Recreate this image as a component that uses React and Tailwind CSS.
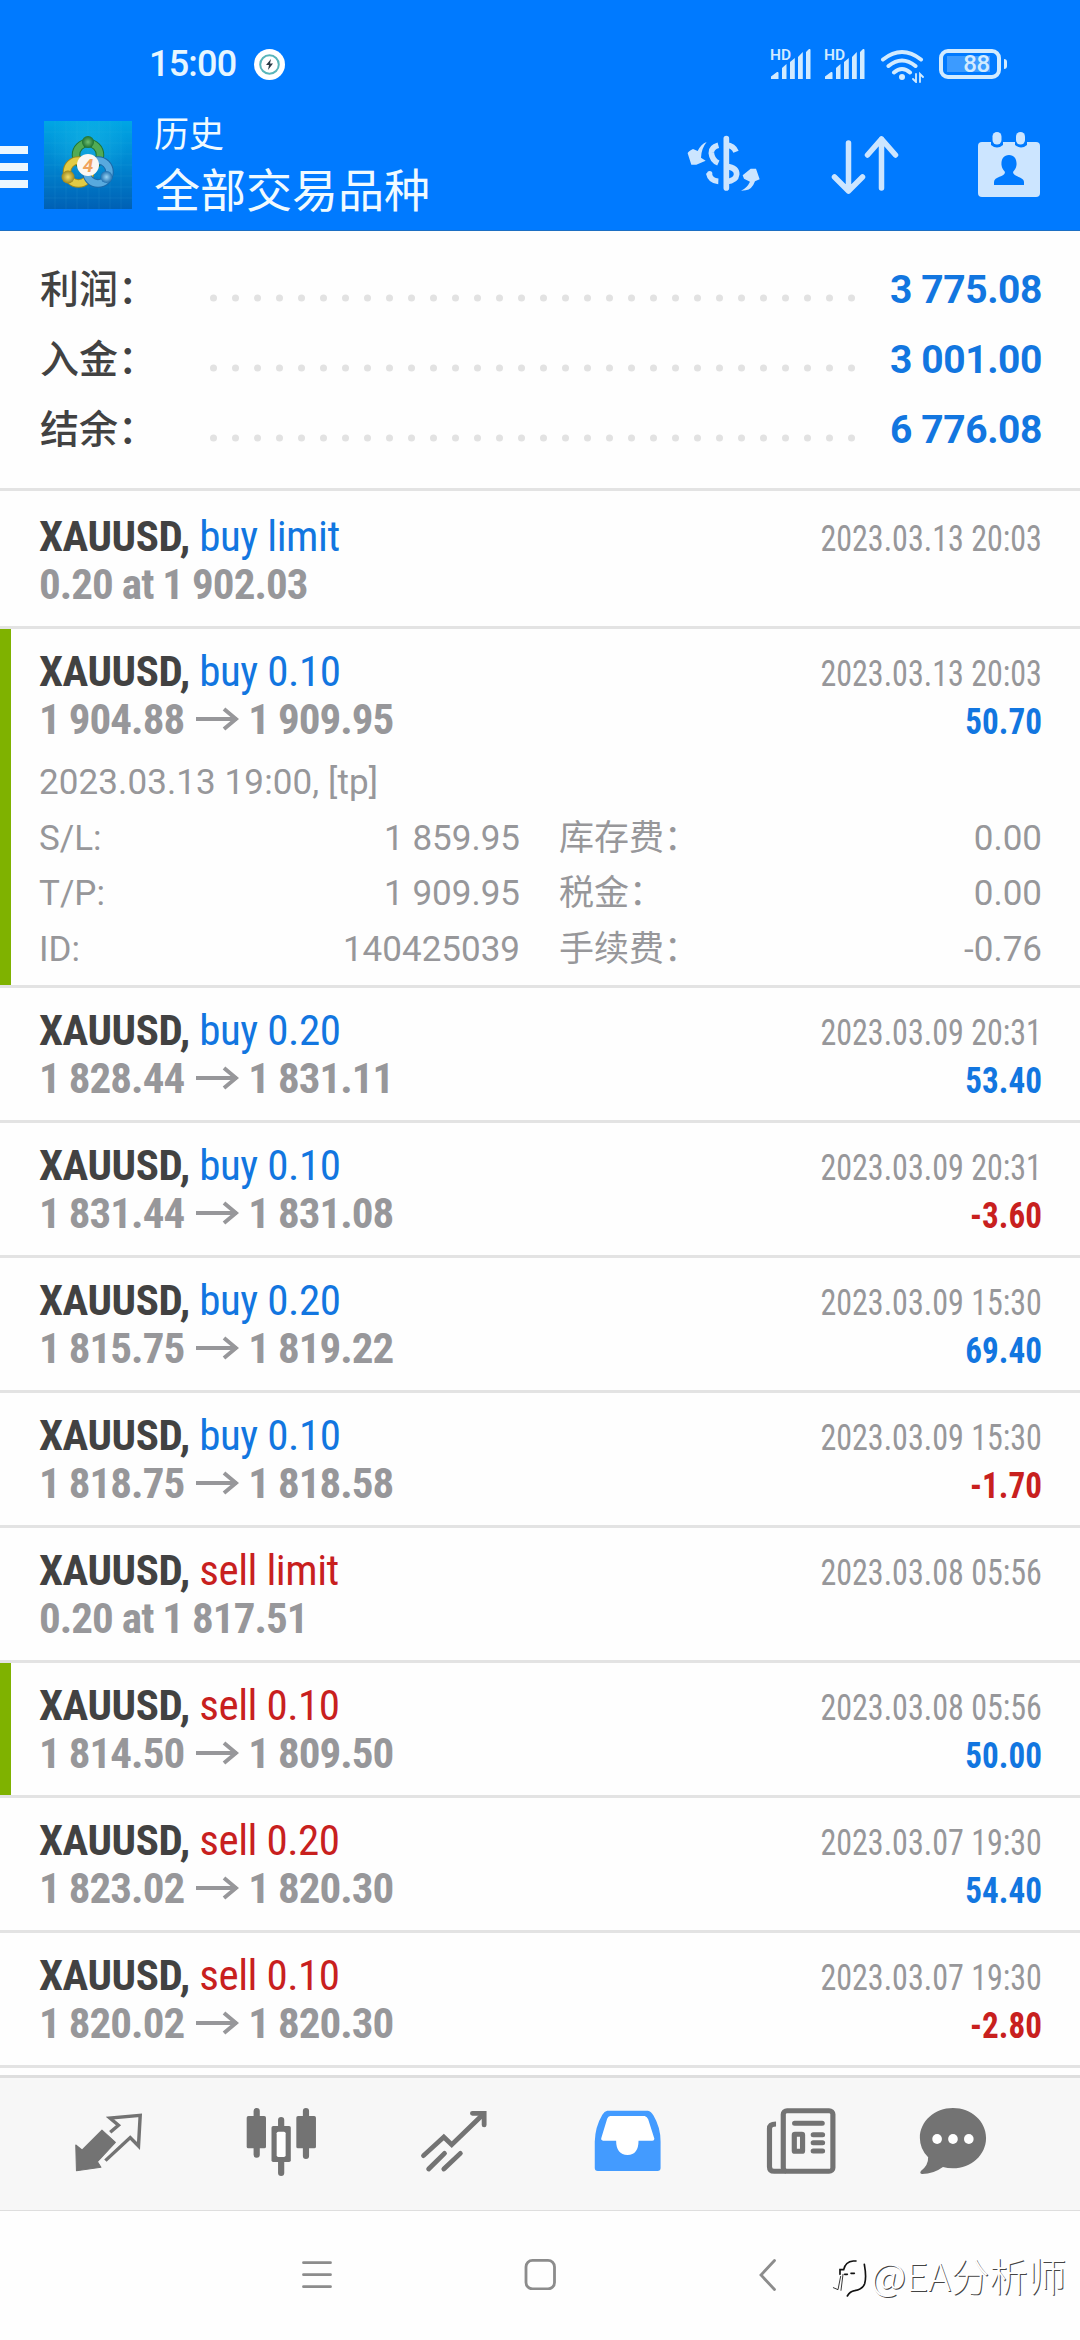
import React from 'react';
import clsx from 'clsx';

const summary = [
  { label: '利润：', value: '3 775.08' },
  { label: '入金：', value: '3 001.00' },
  { label: '结余：', value: '6 776.08' },
];

const deals = [
  { side: 'buy', volume: 'limit', at: '0.20 at 1 902.03', time: '2023.03.13 20:03' },
  {
    side: 'buy', volume: '0.10', from: '1 904.88', to: '1 909.95', time: '2023.03.13 20:03', profit: '50.70', marked: true,
    details: {
      comment: '2023.03.13 19:00, [tp]',
      rows: [
        ['S/L:', '1 859.95', '库存费：', '0.00'],
        ['T/P:', '1 909.95', '税金：', '0.00'],
        ['ID:', '140425039', '手续费：', '-0.76'],
      ],
    },
  },
  { side: 'buy', volume: '0.20', from: '1 828.44', to: '1 831.11', time: '2023.03.09 20:31', profit: '53.40' },
  { side: 'buy', volume: '0.10', from: '1 831.44', to: '1 831.08', time: '2023.03.09 20:31', profit: '-3.60' },
  { side: 'buy', volume: '0.20', from: '1 815.75', to: '1 819.22', time: '2023.03.09 15:30', profit: '69.40' },
  { side: 'buy', volume: '0.10', from: '1 818.75', to: '1 818.58', time: '2023.03.09 15:30', profit: '-1.70' },
  { side: 'sell', volume: 'limit', at: '0.20 at 1 817.51', time: '2023.03.08 05:56' },
  { side: 'sell', volume: '0.10', from: '1 814.50', to: '1 809.50', time: '2023.03.08 05:56', profit: '50.00', marked: true },
  { side: 'sell', volume: '0.20', from: '1 823.02', to: '1 820.30', time: '2023.03.07 19:30', profit: '54.40' },
  { side: 'sell', volume: '0.10', from: '1 820.02', to: '1 820.30', time: '2023.03.07 19:30', profit: '-2.80' },
];

function Signal() {
  return (
    <svg className="w-[42px] h-[32px] overflow-visible" viewBox="0 0 42 32" fill="currentColor">
      <text x="0" y="12" fontSize="15.500" fontWeight="600" fontFamily="Roboto, sans-serif">HD</text>
      <path d="M1 31v-2.5l6-4.5q1.500-.5 1.500 1v6zM12 31V20l4.500-4v15zM20 31V14l4.800-4v21zM28 31V9l4.800-5v27zM36 31V4l3-3q1.500-.5 1.500 1v29z" />
    </svg>
  );
}

function Wifi() {
  return (
    <svg className="w-[44px] h-[34px]" viewBox="0 0 44 34" fill="none" stroke="currentColor" strokeWidth="4" strokeLinecap="round">
      <path d="M3 10.500q19-15 38 0M8.500 17q13.500-11 27 0M14 23.500q8-7 16 0" />
      <circle cx="22" cy="28" r="3" fill="currentColor" stroke="none" />
      <path d="M36 25v8l-3-3M40 33v-8l3 3" strokeWidth="1.800" />
    </svg>
  );
}

function Logo() {
  return (
    <svg className="w-[88px] h-[88px]" viewBox="0 0 88 88">
      <defs>
        <linearGradient id="sky" x1="0" y1="0" x2="0" y2="1">
          <stop offset="0" stopColor="#00a6e4" />
          <stop offset="0.5" stopColor="#0085d0" />
          <stop offset="1" stopColor="#0060b4" />
        </linearGradient>
        <radialGradient id="glow">
          <stop offset="0" stopColor="#20c0e8" stopOpacity="0.5" />
          <stop offset="1" stopColor="#20c0e8" stopOpacity="0" />
        </radialGradient>
        <radialGradient id="green"><stop offset="0" stopColor="#6fbf72" /><stop offset="1" stopColor="#1d7030" /></radialGradient>
        <radialGradient id="gold"><stop offset="0" stopColor="#f3df6a" /><stop offset="1" stopColor="#9c861c" /></radialGradient>
        <radialGradient id="aqua"><stop offset="0" stopColor="#9bd5f5" /><stop offset="1" stopColor="#2070b0" /></radialGradient>
      </defs>
      <rect width="88" height="88" fill="url(#sky)" />
      <circle cx="44" cy="24" r="40" fill="url(#glow)" />
      <path d="M11 0v88M22 0v88M33 0v88M44 0v88M55 0v88M66 0v88M77 0v88M0 11h88M0 22h88M0 33h88M0 44h88M0 55h88M0 66h88M0 77h88" stroke="#4cc4ee" strokeOpacity="0.15" strokeWidth="0.7" />
      <g fill="none" strokeWidth="6.500">
        <circle cx="44" cy="34" r="12" stroke="#1f7535" strokeWidth="8.500" />
        <circle cx="44" cy="34" r="12" stroke="#52ab55" />
        <circle cx="34.500" cy="51" r="11.500" stroke="#a08a1c" strokeWidth="8.500" />
        <circle cx="34.500" cy="51" r="11.500" stroke="#e2cb45" />
        <circle cx="54" cy="51" r="11.500" stroke="#1c68a8" strokeWidth="8.500" />
        <circle cx="54" cy="51" r="11.500" stroke="#58a9de" />
      </g>
      <circle cx="44" cy="21" r="6" fill="url(#green)" />
      <circle cx="24" cy="56" r="6.500" fill="url(#gold)" />
      <circle cx="62.500" cy="56" r="6" fill="url(#aqua)" />
      <circle cx="44" cy="44" r="11" fill="#fbf7f2" />
      <text x="44" y="51" textAnchor="middle" fontSize="19" fontWeight="700" fontStyle="italic" fontFamily="Roboto, sans-serif" fill="#f0a35c">4</text>
    </svg>
  );
}

function StatusBar() {
  return (
    <div className="flex items-center h-[30px] mt-[49px] pl-[149px] pr-[73px] text-[#d2ebff]">
      <span className="font-['Roboto'] font-medium text-[36px] leading-[30px] w-[88px] tracking-[-0.8px] text-[#e6f6ff]">15:00</span>
      <svg className="w-[31px] h-[31px] ml-[17px]" viewBox="0 0 31 31">
        <circle cx="15.500" cy="15.500" r="15.500" fill="#fff" />
        <circle cx="15.500" cy="15.500" r="9.300" fill="none" stroke="#59b5b9" strokeWidth="2" />
        <path d="M17 10l-5 6h3l-1 5 5-6.500h-3z" fill="#2b3a45" />
      </svg>
      <div className="flex items-center ml-auto">
        <Signal />
        <div className="ml-[12px]"><Signal /></div>
        <div className="ml-[14px] mt-1"><Wifi /></div>
        <div className="flex items-center ml-[15px]">
          <div className="flex items-center w-[62px] h-[30px] border-[4px] border-current rounded-[9px] px-1">
            <div className="flex items-center justify-center w-[43px] h-4 pl-4 bg-[#3c9bff] font-['Roboto'] font-medium text-[24px] tracking-[-0.5px]">88</div>
          </div>
          <div className="w-[3px] h-[10px] ml-[3px] rounded-r bg-current" />
        </div>
      </div>
    </div>
  );
}

function Toolbar() {
  return (
    <div className="flex items-start mt-[42px] text-[#cce5ff]">
      <div className="flex flex-col gap-[9px] mt-[25px] w-7">
        <div className="h-2 bg-[#ebf7ff]" />
        <div className="h-2 bg-[#ebf7ff]" />
        <div className="h-2 bg-[#ebf7ff]" />
      </div>
      <div className="ml-4"><Logo /></div>
      <div className="ml-[22px] -mt-[11px] text-[#f0faff] font-['Noto_Sans_CJK_SC']">
        <div className="text-[35px] leading-[44px]">历史</div>
        <div className="text-[46px] leading-[66px]">全部交易品种</div>
      </div>
      <div className="flex items-start ml-auto pr-[39px]">
        <svg className="w-[76px] h-[60px] mt-[13px]" viewBox="46 42 228 180" preserveAspectRatio="none" fill="none" stroke="currentColor" strokeWidth="17">
          <path d="M164 56V204" strokeLinecap="round" />
          <path d="M140 76Q118 82 119 99Q121 121 140 129M111 159Q116 183 140 184" />
          <circle cx="114" cy="161" r="8" fill="currentColor" stroke="none" />
          <path d="M164 75Q186 77 193 95M164 139Q196 143 195 163Q193 183 164 185" />
          <path d="M105 66Q88 72 78 93L64 87Q48 95 48 100L59 134H74L102 122L88 113Q89 85 105 66Z" fill="currentColor" stroke="none" />
          <path d="M208 212Q226 204 235 185L217 176L213 166L237 146H253L264 178L250 184Q241 209 222 211Z" fill="currentColor" stroke="none" />
        </svg>
        <svg className="w-[70px] h-[60px] ml-[68px] mt-[13px]" viewBox="0 0 70 60" fill="none" stroke="currentColor" strokeWidth="5.500" strokeLinecap="round" strokeLinejoin="round">
          <path d="M17.500 9v48M3.500 43l14 14 14-14M50.500 54V5M36.500 21l14-16 14 16" />
        </svg>
        <svg className="w-[64px] h-[66px] ml-[76px] mt-[10px]" viewBox="0 0 64 66" fill="currentColor">
          <rect x="1" y="11" width="62" height="55" rx="4" />
          <path d="M14 0h12v14q-6 5-12 0zM38 0h12v14q-6 5-12 0z" fill="#007aff" />
          <rect x="15.500" y="1" width="9" height="12.500" rx="4.500" />
          <rect x="39" y="1" width="9" height="12.500" rx="4.500" />
          <path d="M32 24c5.500 0 8 4.500 7.500 10-.3 3.500-2 5-3.500 7 0 5 11 4.500 11 10v3H17v-3c0-5.500 11-5 11-10-1.500-2-3.200-3.500-3.500-7C24 28.500 26.500 24 32 24z" fill="#007aff" />
        </svg>
      </div>
    </div>
  );
}

function SummaryRow({ label, value }) {
  return (
    <div className="flex items-center h-[70px]">
      <div className="w-[170px] pb-[7px] font-['Noto_Sans_CJK_SC'] font-medium text-[39px] text-[#424242]">{label}</div>
      <svg className="w-[646px] h-2 mt-4" viewBox="0 0 646 8" fill="#e2e2e2">
        {Array.from({ length: 30 }, (_, i) => (
          <circle key={i} cx={3.5 + i * 22} cy="4" r="3.500" />
        ))}
      </svg>
      <div className="ml-auto pr-[38px] pt-px font-['Roboto'] font-bold text-[39px] tracking-[-0.4px] text-[#1276e0]">{value}</div>
    </div>
  );
}

function Deal({ deal, first }) {
  const loss = deal.profit && deal.profit.startsWith('-');
  return (
    <div className="flex border-b-[3px] border-[#e3e3e3]">
      <div className={clsx('w-[11px]', deal.marked && 'bg-[#7fb200]')} />
      <div className={clsx('flex-1 pl-[28px] pr-[38px]', first ? 'pt-[21px]' : 'pt-[18px]', deal.details ? 'h-[356px]' : first ? 'h-[135px]' : 'h-[132px]')}>
        <div className="flex justify-between font-['Roboto'] font-stretch-condensed">
          <div className="text-[43px] leading-[48px]">
            <div className="font-bold tracking-[-0.45px] text-[#424242]">
              XAUUSD,{' '}
              <span className={clsx('font-normal', deal.side === 'buy' ? 'text-[#1276e0]' : 'text-[#c8201e]')}>
                {deal.side} {deal.volume}
              </span>
            </div>
            <div className="flex items-center font-bold tracking-[-0.95px] text-[#97979a]">
              {deal.at || (
                <>
                  {deal.from}
                  <svg className="w-[43px] h-[24px] ml-[12px] mr-[9px]" viewBox="0 0 43 24" fill="none" stroke="currentColor" strokeWidth="4">
                    <path d="M0 12h41M28 2l12 10-12 10" />
                  </svg>
                  {deal.to}
                </>
              )}
            </div>
          </div>
          <div className="pt-[3px] text-right text-[36px] leading-[48px]">
            <div className="origin-right scale-x-[0.89] text-[#97979a]">{deal.time}</div>
            <div className={clsx('origin-right scale-x-[0.92] font-bold', loss ? 'text-[#c8201e]' : 'text-[#1276e0]')}>{deal.profit}</div>
          </div>
        </div>
        {deal.details && (
          <div className="mt-[9px] font-['Roboto','Noto_Sans_CJK_SC'] text-[35px] leading-[55.5px] text-[#97979a]">
            <div className="h-[55.5px] tracking-[0.1px]">{deal.details.comment}</div>
            {deal.details.rows.map(([k1, v1, k2, v2]) => (
              <div key={k1} className="flex h-[55.5px]">
                <div className="flex justify-between w-[481px]">
                  <span>{k1}</span>
                  <span>{v1}</span>
                </div>
                <div className="flex justify-between flex-1 pl-[39px]">
                  <span>{k2}</span>
                  <span>{v2}</span>
                </div>
              </div>
            ))}
          </div>
        )}
      </div>
    </div>
  );
}

function TabBar() {
  const cell = 'w-[173px] h-[132px]';
  return (
    <div className="flex h-[136px] pl-[22px] bg-[#f7f7f7] border-t-[3px] border-b border-[#dedede] text-[#737373]">
      <svg className={cell} viewBox="64 84 502 396" preserveAspectRatio="none">
        <path d="M296 240L335 277L283 335L293 352L222 362L220 285L238 300Z" fill="currentColor" stroke="currentColor" strokeWidth="3" strokeLinejoin="round" />
        <path d="M320 247L344 226L319 204L407 196L402 288L378 263L306 332" fill="none" stroke="currentColor" strokeWidth="10" />
      </svg>
      <svg className={cell} viewBox="566 84 502 396" preserveAspectRatio="none">
        <path d="M745 183V314M888 183V318M816 210V240M816 330V369" stroke="currentColor" strokeWidth="18" strokeLinecap="round" />
        <rect x="716" y="198" width="56" height="97" rx="5" fill="currentColor" />
        <rect x="860" y="198" width="57" height="97" rx="5" fill="currentColor" />
        <rect x="788" y="228" width="56" height="108" rx="5" fill="currentColor" />
        <rect x="803" y="245" width="26" height="76" rx="5" fill="#fff" />
      </svg>
      <svg className={cell} viewBox="1069 84 502 396" preserveAspectRatio="none" fill="none" stroke="currentColor" strokeWidth="14" strokeLinecap="round">
        <path d="M1230 317L1289 261L1312 284L1404 192" />
        <path d="M1372 190H1406V225" />
        <path d="M1245 357L1291 310M1289 357L1337 310" />
      </svg>
      <svg className={clsx(cell, 'text-[#439bff]')} viewBox="3 84 502 396" preserveAspectRatio="none">
        <path d="M195 182H313Q323 184 329 196Q350 232 350 275V354Q350 363 341 363H168Q159 363 159 354V275Q160 230 181 194Q187 183 195 182Z" fill="currentColor" />
        <path d="M204 198H304Q311 200 314 208L332 266Q332 272 326 272H286Q286 314 254 315Q221 313 221 272H183Q176 271 178 264L195 206Q198 199 204 198Z" fill="#fff" />
      </svg>
      <svg className={cell} viewBox="505 84 502 396" preserveAspectRatio="none" fill="none" stroke="currentColor" strokeWidth="15">
        <rect x="706" y="182" width="144" height="182" rx="11" />
        <path d="M685 222Q666 222 666 236V350Q666 364 680 364H715" />
        <path d="M739 220H819M793 254H820M793 278H820M793 303H820" strokeLinecap="round" />
        <rect x="738" y="253" width="24" height="51" rx="2" />
      </svg>
      <svg className={cell} viewBox="1007.6 84 502 396" preserveAspectRatio="none" fill="currentColor">
        <path d="M1199 174C1252 174 1295 213 1295 264C1295 315 1252 355 1199 355Q1183 355 1170 351Q1142 372 1110 372Q1101 371 1106 363Q1128 346 1127 322Q1103 297 1103 264C1103 213 1146 174 1199 174Z" />
        <g fill="#fff">
          <ellipse cx="1153" cy="267" rx="14" ry="15" />
          <ellipse cx="1199" cy="267" rx="14" ry="15" />
          <ellipse cx="1245" cy="267" rx="14" ry="15" />
        </g>
      </svg>
    </div>
  );
}

function SystemNav() {
  return (
    <div className="relative flex items-start flex-1 pt-[47px] pl-[301px] text-[#8c8c8c]">
      <svg className="w-8 h-8" viewBox="0 0 32 32" stroke="currentColor" strokeWidth="2.800" strokeLinecap="round">
        <path d="M2.500 4.700h27M2.500 16.700h27M2.500 28.700h27" />
      </svg>
      <svg className="w-8 h-8 ml-[191px]" viewBox="0 0 32 32" fill="none" stroke="currentColor" strokeWidth="2.800">
        <rect x="2" y="2.400" width="28.500" height="28.500" rx="6.500" />
      </svg>
      <svg className="w-[18px] h-[34px] ml-[202px]" viewBox="0 0 18 34" fill="none" stroke="currentColor" strokeWidth="2.800" strokeLinecap="round">
        <path d="M16.500 2.500L3 17l13.500 14.500" />
      </svg>
      <div className="absolute left-[830px] top-[35px] flex items-center h-[56px] whitespace-nowrap">
        <svg className="w-[42px] h-[44px] mt-[10px] -mr-px" viewBox="30 70 126 132" fill="none" stroke="#111" strokeWidth="5" strokeLinecap="round">
          <path d="M60 122V108H71Q76 84 100 82H108M133 92Q140 130 134 150Q128 167 104 171Q90 173 82 187" />
          <path d="M62 128L54 168L40 162M69 122L63 170" strokeWidth="2.500" />
          <path d="M74 122H82M93 119H103" />
        </svg>
        <span className="font-['Noto_Sans_CJK_SC'] font-light text-[38.500px] leading-[56px] text-white [text-shadow:1px_1px_0_#444]">@EA分析师</span>
      </div>
    </div>
  );
}

export default function App() {
  return (
    <div className="flex flex-col w-[1080px] h-[2340px] overflow-hidden bg-[#fefefe]">
      <div className="flex flex-col h-[231px] shrink-0 bg-[#007aff] border-b border-[#1c6fc4]">
        <StatusBar />
        <Toolbar />
      </div>
      <div className="h-[260px] shrink-0 pt-[24px] pl-[40px] border-b-[3px] border-[#e3e3e3]">
        {summary.map((row) => (
          <SummaryRow key={row.label} {...row} />
        ))}
      </div>
      <div className="h-[1584px] shrink-0 overflow-hidden">
        {deals.map((deal, i) => (
          <Deal key={i} deal={deal} first={i === 0} />
        ))}
      </div>
      <TabBar />
      <SystemNav />
    </div>
  );
}
